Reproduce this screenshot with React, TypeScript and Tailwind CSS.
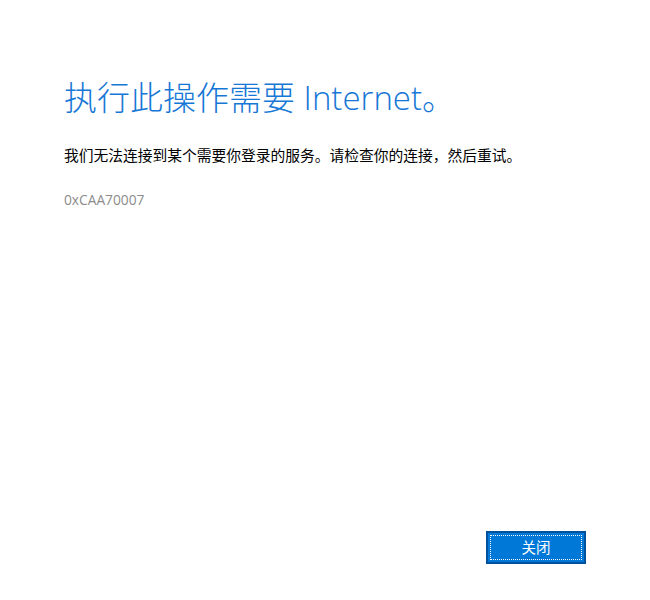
export default function App() {
  return (
    <div
      className="flex h-[600px] w-[650px] flex-col bg-white pl-[64px] pr-[64px]"
      style={{ fontFamily: '"Open Sans", "Noto Sans CJK SC", sans-serif' }}
    >
      <h1 className="mt-[74px] text-[33px] font-light leading-[48px] text-[#1677d6]">
        执行此操作需要 Internet。
      </h1>
      <p className="mt-[22px] text-[14.75px] leading-[22px] text-black">
        我们无法连接到某个需要你登录的服务。请检查你的连接，然后重试。
      </p>
      <p className="mt-[23px] text-[13.75px] leading-[22px] text-[#8c8c8c]">
        0xCAA70007
      </p>
      <div className="flex-1" />
      <button
        type="button"
        className="mb-[36px] self-end h-[33px] w-[100px] border-2 border-[#00529c] bg-[#0078d7] p-[2px]"
      >
        <span className="flex h-full w-full items-center justify-center border border-dotted border-white text-[14.5px] text-white">
          关闭
        </span>
      </button>
    </div>
  );
}
